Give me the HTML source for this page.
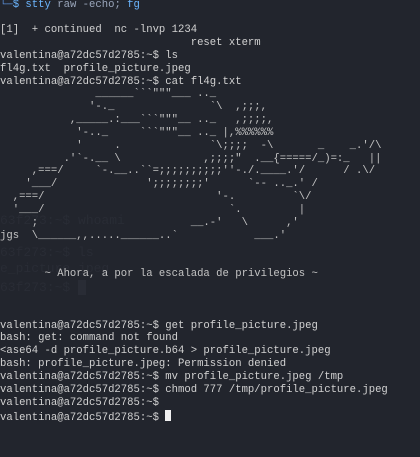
<!DOCTYPE html>
<html><head><meta charset="utf-8"><style>
html,body{margin:0;padding:0;width:420px;height:457px;overflow:hidden;background:#22252d;}
.ghost{position:absolute;left:0;font-family:"Liberation Mono",monospace;font-size:13px;color:#292c35;white-space:pre;margin:0;}
pre.t{position:absolute;left:0;top:-1.5px;margin:0;font-family:"Liberation Mono",monospace;font-size:10.6px;line-height:12.85px;color:#d2d2d2;white-space:pre;}
.a{color:#c4c4c4}
.b{color:#5a8fd8}.c{color:#6cb6ff}.g{color:#9aa6bb}
.cur{display:inline-block;width:6px;height:11px;background:#f0f0f0;vertical-align:-1px;}
</style></head><body>
<div class="ghost" style="top:213px">63f273:~$ whoami</div>
<div class="ghost" style="top:245px">63f273:~$ ls</div>
<div class="ghost" style="top:261px">e_picture.jpeg</div>
<div class="ghost" style="top:280px">63f273:~$ <span style="background:#292c35">&nbsp;</span></div>
<pre class="t"><span class="b">└─</span><span class="c">$ stty</span> <span class="g">raw -echo;</span> <span class="c">fg</span>

[1]  + continued  nc -lnvp 1234
                              reset xterm
valentina@a72dc57d2785:~$ ls
fl4g.txt  profile_picture.jpeg
valentina@a72dc57d2785:~$ cat fl4g.txt
<span class="a">               ______&#96;&#96;&#96;"""___ .._
              '-._               &#96;\  ,;;;,
           ,_____.:___&#96;&#96;&#96;"""__ .._   ,;;;;,
            '-.._     &#96;&#96;&#96;"""__ .._ |,%%%%%%
            '     .              &#96;\;;;;  -\       _    _.'/\
          .'&#96;-.__ \             ,;;;;"  .__{=====/_)=:_   ||
     ,===/     &#96;-.__..&#96;&#96;=;;;;;;;;;;''-./.____.'/      / .\/
    '___/              ';;;;;;;;'      &#96;-- .._.' /
  ,===/                           '-.         &#96;\/
  '___/                             &#96;.         |
     ;                        __.-'   \      ,'
jgs  \______,,.....______..&#96;            ___.'


       ~ Ahora, a por la escalada de privilegios ~</span>



valentina@a72dc57d2785:~$ get profile_picture.jpeg
bash: get: command not found
&lt;ase64 -d profile_picture.b64 &gt; profile_picture.jpeg
bash: profile_picture.jpeg: Permission denied
valentina@a72dc57d2785:~$ mv profile_picture.jpeg /tmp
valentina@a72dc57d2785:~$ chmod 777 /tmp/profile_picture.jpeg
valentina@a72dc57d2785:~$
valentina@a72dc57d2785:~$ <span class="cur"></span></pre>
</body></html>
